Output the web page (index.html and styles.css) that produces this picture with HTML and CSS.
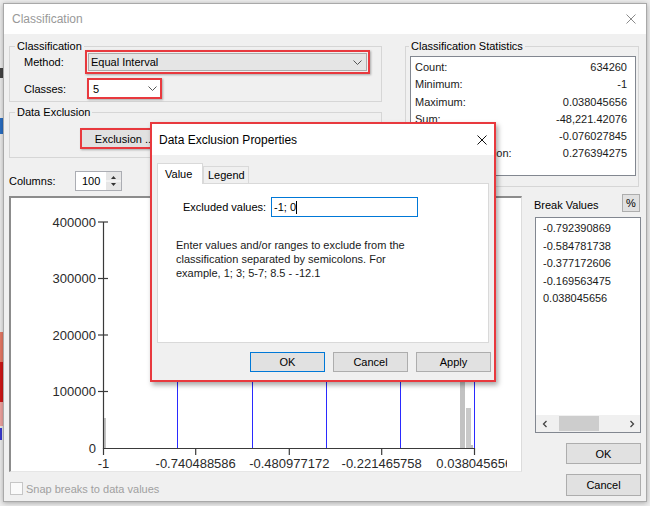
FILE: index.html
```html
<!DOCTYPE html>
<html>
<head>
<meta charset="utf-8">
<link rel="stylesheet" href="styles.css">
</head>
<body>
<div class="desk">
  <div class="dk dk-s"></div>
  <div class="dk dk-b"></div>
  <div class="dk dk-r1"></div>
  <div class="dk dk-r2"></div>
  <div class="dk dk-r3"></div>
  <div class="dk dk-b2"></div>
</div>

<div class="win-main">
  <div class="titlebar">
    <span class="title">Classification</span>
    <svg class="close" width="10" height="10" viewBox="0 0 10 10"><path d="M0.5 0.5L9.5 9.5M9.5 0.5L0.5 9.5" stroke="#8a8a8a" stroke-width="1" fill="none"/></svg>
  </div>
  <div class="client">
    <div class="top-row">
      <div class="left-stack">
        <div class="group g-class">
          <span class="gtitle">Classification</span>
          <div class="frow r-method">
            <span class="flabel">Method:</span>
            <div class="hl hl-method">
              <div class="combo combo-gray"><span>Equal Interval</span>
                <svg width="9" height="5" viewBox="0 0 9 5"><path d="M0.5 0.5L4.5 4.5L8.5 0.5" fill="none" stroke="#555" stroke-width="1"/></svg>
              </div>
            </div>
          </div>
          <div class="frow r-classes">
            <span class="flabel">Classes:</span>
            <div class="hl hl-classes">
              <div class="combo combo-white"><span>5</span>
                <svg width="9" height="5" viewBox="0 0 9 5"><path d="M0.5 0.5L4.5 4.5L8.5 0.5" fill="none" stroke="#555" stroke-width="1"/></svg>
              </div>
            </div>
          </div>
        </div>
        <div class="group g-excl">
          <span class="gtitle">Data Exclusion</span>
          <div class="hl hl-excl"><div class="xbtn">Exclusion ...</div></div>
        </div>
        <div class="columns-row">
          <span class="clabel">Columns:</span>
          <div class="spin">
            <span class="spin-val">100</span>
            <div class="spin-btns">
              <svg width="15" height="18" viewBox="0 0 15 18">
                <rect x="0" y="0" width="15" height="18" fill="#e6e6e6"/>
                <line x1="0" y1="9" x2="15" y2="9" stroke="#fff" stroke-width="1"/>
                <path d="M5 7L7.5 4L10 7Z" fill="#333"/>
                <path d="M5 11L10 11L7.5 14Z" fill="#333"/>
              </svg>
            </div>
          </div>
        </div>
      </div>
      <div class="group g-stats">
        <span class="gtitle">Classification Statistics</span>
        <div class="statlist">
          <div class="srow"><span>Count:</span><span>634260</span></div>
          <div class="srow"><span>Minimum:</span><span>-1</span></div>
          <div class="srow"><span>Maximum:</span><span>0.038045656</span></div>
          <div class="srow"><span>Sum:</span><span>-48,221.42076</span></div>
          <div class="srow"><span>Mean:</span><span>-0.076027845</span></div>
          <div class="srow"><span>Standard Deviation:</span><span>0.276394275</span></div>
        </div>
      </div>
    </div>

    <div class="mid-row">
      <div class="mid-left">
        <div class="hist">
          <svg class="chart" width="496" height="273" viewBox="11 198 496 273">
            <g fill="#c2c2c2">
              <rect x="104" y="418" width="2" height="30"/>
              <rect x="460" y="300" width="5" height="148"/>
              <rect x="466" y="408" width="5" height="40" fill="#c9c9c9"/>
              <rect x="471" y="445" width="2" height="3"/>
            </g>
            <g stroke="#2a2aff" stroke-width="1">
              <line x1="177.5" y1="198" x2="177.5" y2="448"/>
              <line x1="252.5" y1="198" x2="252.5" y2="448"/>
              <line x1="326.5" y1="198" x2="326.5" y2="448"/>
              <line x1="400.5" y1="198" x2="400.5" y2="448"/>
              <line x1="474.5" y1="198" x2="474.5" y2="448"/>
            </g>
            <g stroke="#3a3a3a" stroke-width="1.2" fill="none">
              <line x1="103.5" y1="222" x2="103.5" y2="449"/>
              <line x1="103" y1="448.5" x2="475" y2="448.5"/>
              <line x1="98" y1="222" x2="108" y2="222"/>
              <line x1="98" y1="278.5" x2="108" y2="278.5"/>
              <line x1="98" y1="335" x2="108" y2="335"/>
              <line x1="98" y1="391.5" x2="108" y2="391.5"/>
              <line x1="103.5" y1="448" x2="103.5" y2="455"/>
              <line x1="195.7" y1="448" x2="195.7" y2="455"/>
              <line x1="289.3" y1="448" x2="289.3" y2="455"/>
              <line x1="381.7" y1="448" x2="381.7" y2="455"/>
              <line x1="474.5" y1="448" x2="474.5" y2="455"/>
            </g>
            <g class="ylab" text-anchor="end">
              <text x="96" y="226.7">400000</text>
              <text x="96" y="283.2">300000</text>
              <text x="96" y="339.7">200000</text>
              <text x="96" y="396.2">100000</text>
              <text x="96" y="452.9">0</text>
            </g>
            <g class="xlab" text-anchor="middle">
              <text x="103.5" y="467.7">-1</text>
              <text x="195.7" y="467.7">-0.740488586</text>
              <text x="289.3" y="467.7">-0.480977172</text>
              <text x="381.7" y="467.7">-0.221465758</text>
              <text x="474.3" y="467.7">0.038045656</text>
            </g>
          </svg>
        </div>
        <div class="snap"><span class="cbox"></span><span class="snap-text">Snap breaks to data values</span></div>
      </div>
      <div class="mid-right">
        <div class="bv-head">
          <span class="bv-label">Break Values</span>
          <div class="pct">%</div>
        </div>
        <div class="breaklist">
          <div class="brows">
            <div>-0.792390869</div>
            <div>-0.584781738</div>
            <div>-0.377172606</div>
            <div>-0.169563475</div>
            <div>0.038045656</div>
          </div>
          <div class="hscroll">
            <svg width="8" height="8" viewBox="0 0 8 8"><path d="M5.5 1L2.5 4L5.5 7" fill="none" stroke="#444" stroke-width="1.3"/></svg>
            <div class="track"><div class="thumb"></div></div>
            <svg width="8" height="8" viewBox="0 0 8 8"><path d="M2.5 1L5.5 4L2.5 7" fill="none" stroke="#444" stroke-width="1.3"/></svg>
          </div>
        </div>
        <div class="btn main-ok">OK</div>
        <div class="btn main-cancel">Cancel</div>
      </div>
    </div>
  </div>
</div>

<div class="dlg">
  <div class="dlg-title">
    <span>Data Exclusion Properties</span>
    <svg width="10" height="10" viewBox="0 0 10 10"><path d="M0.5 0.5L9.5 9.5M9.5 0.5L0.5 9.5" stroke="#111" stroke-width="1" fill="none"/></svg>
  </div>
  <div class="dlg-body">
    <div class="tabs">
      <div class="tab sel">Value</div>
      <div class="tab">Legend</div>
    </div>
    <div class="page">
      <div class="excl-row">
        <span class="excl-label">Excluded values:</span>
        <div class="tbox">-1; 0<span class="caret"></span></div>
      </div>
      <p class="desc">Enter values and/or ranges to exclude from the<br>classification separated by semicolons. For<br>example, 1; 3; 5-7; 8.5 - -12.1</p>
    </div>
    <div class="dlg-btns">
      <div class="btn def">OK</div>
      <div class="btn">Cancel</div>
      <div class="btn">Apply</div>
    </div>
  </div>
</div>
</body>
</html>
```

FILE: styles.css
```css
* { box-sizing: border-box; }
html, body { margin: 0; padding: 0; }
body {
  width: 650px;
  height: 506px;
  overflow: hidden;
  position: relative;
  background: #e4e4e4;
  font-family: "Liberation Sans", Arial, sans-serif;
  font-size: 11px;
  color: #000;
}

/* desktop behind window */
.desk { position: absolute; left: 0; top: 0; width: 650px; height: 506px; background: #ededed; }
.dk { position: absolute; left: 0; width: 3px; }
.dk-s { top: 68px; height: 10px; background: #444; }
.dk-b { top: 118px; height: 16px; background: #2a6fc4; }
.dk-r1 { top: 332px; height: 30px; background: #e77a66; }
.dk-r2 { top: 362px; height: 40px; background: #d01818; }
.dk-r3 { top: 402px; height: 24px; background: #f0a4a0; }
.dk-b2 { top: 428px; height: 12px; background: #3a3ad0; width: 2px; }

/* main window */
.win-main {
  position: absolute;
  left: 3px;
  top: 3px;
  width: 644px;
  height: 499px;
  border: 1px solid #a9a9a9;
  background: #f0f0f0;
  box-shadow: 0 1px 5px rgba(0, 0, 0, 0.3);
  display: flex;
  flex-direction: column;
}
.titlebar {
  height: 30px;
  flex: none;
  background: #fff;
  display: flex;
  align-items: center;
  justify-content: space-between;
  padding: 0 10px 0 8px;
}
.title { font-size: 12px; color: #999; }
.close { display: block; }

.client { flex: 1; padding: 12px 0 0 5px; }

.top-row { display: flex; align-items: flex-start; }
.left-stack { width: 373px; }

.group {
  position: relative;
  border: 1px solid #d6d6d6;
}
.gtitle {
  position: absolute;
  top: -7px;
  left: 5px;
  padding: 0 2px;
  line-height: 13px;
  background: #f0f0f0;
  white-space: nowrap;
}

.g-class { padding: 3px 0 2px 0; }
.frow { display: flex; align-items: center; }
.r-classes { margin-top: 4px; }
.flabel { width: 61px; margin-left: 14px; }

.hl {
  border: 2px solid #e8393e;
  box-shadow: 1px 1px 2px rgba(0, 0, 0, 0.3);
}
.hl-method { width: 285px; height: 24px; padding: 1px; }
.hl-classes { width: 75px; height: 21px; margin-left: 2px; }
.combo {
  height: 100%;
  display: flex;
  align-items: center;
  justify-content: space-between;
}
.combo svg { display: block; }
.combo-gray { background: #e5e5e5; border: 1px solid #acacac; padding: 0 4px 0 2px; }
.combo-white { background: #fff; padding: 0 3px 0 4px; }

.g-excl { margin-top: 10px; padding: 15px 0 8px 0; }
.hl-excl { width: 89px; height: 21px; margin-left: 70px; }
.xbtn {
  height: 100%;
  background: #e1e1e1;
  display: flex;
  align-items: center;
  justify-content: center;
}

.columns-row { display: flex; align-items: center; margin-top: 13px; height: 20px; }
.clabel { width: 66px; }
.spin {
  width: 47px;
  height: 20px;
  background: #fff;
  border: 1px solid #abadb3;
  display: flex;
  align-items: center;
  justify-content: space-between;
}
.spin-val { padding-left: 6px; }
.spin-btns svg { display: block; }

.g-stats { width: 234px; margin-left: 23px; padding: 9px 0 10px 0; }
.g-stats .gtitle { left: 3px; }
.statlist {
  width: 226px;
  height: 120px;
  margin-left: 4px;
  background: #fff;
  border: 1px solid #828790;
  padding: 2px 8px 0 4px;
  color: #1a1a1a;
}
.srow { display: flex; justify-content: space-between; line-height: 17.3px; white-space: nowrap; }

/* middle */
.mid-row { display: flex; align-items: flex-start; margin-top: 3px; gap: 12px; }
.mid-left { width: 513px; }
.hist {
  margin-top: 2px;
  height: 276px;
  background: #fff;
  border-top: 2px solid #8c8c8c;
  border-left: 2px solid #8c8c8c;
  border-right: 1px solid #dcdcdc;
  border-bottom: 1px solid #e6e6e6;
}
.chart { display: block; overflow: hidden; }
.chart text { font-family: "Liberation Sans", Arial, sans-serif; font-size: 13px; fill: #2a2a2a; }

.snap { display: flex; align-items: center; margin-top: 10px; height: 13px; }
.cbox { width: 13px; height: 13px; border: 1px solid #c6c6c6; background: #fafafa; margin-left: 1px; }
.snap-text { margin-left: 3px; color: #a0a0a0; }

.mid-right { width: 107px; display: flex; flex-direction: column; }
.bv-head { display: flex; justify-content: space-between; align-items: flex-start; height: 18px; }
.bv-label { margin-top: 5px; line-height: 13px; }
.pct {
  width: 18px;
  height: 18px;
  margin-right: 1px;
  background: #e1e1e1;
  border: 1px solid #adadad;
  display: flex;
  align-items: center;
  justify-content: center;
}
.breaklist {
  margin: 5px 0 0 1px;
  width: 106px;
  height: 216px;
  background: #fff;
  border: 1px solid #828790;
  display: flex;
  flex-direction: column;
}
.brows { flex: 1; padding: 2px 0 0 7px; color: #1a1a1a; }
.brows div { line-height: 17.6px; }
.hscroll {
  height: 17px;
  background: #f0f0f0;
  display: flex;
  align-items: center;
  padding: 0 4px 0 5px;
  gap: 3px;
}
.hscroll svg { display: block; }
.track { flex: 1; height: 15px; }
.thumb { width: 40px; height: 15px; background: #cdcdcd; margin-left: 7px; }

.btn {
  width: 75px;
  height: 21px;
  background: #e1e1e1;
  border: 1px solid #adadad;
  display: flex;
  align-items: center;
  justify-content: center;
}
.main-ok { align-self: flex-end; margin-top: 10px; }
.main-cancel { align-self: flex-end; margin-top: 10px; height: 22px; }

/* dialog */
.dlg {
  position: absolute;
  left: 150px;
  top: 122px;
  width: 346px;
  height: 260px;
  border: 2px solid #e8393e;
  background: #f0f0f0;
  box-shadow: 2px 3px 5px rgba(0, 0, 0, 0.35);
  display: flex;
  flex-direction: column;
}
.dlg-title {
  height: 31px;
  flex: none;
  background: #fff;
  display: flex;
  align-items: center;
  justify-content: space-between;
  padding: 0 7px;
  font-size: 12px;
}
.dlg-title svg { display: block; }
.dlg-body { flex: 1; padding: 8px 0 0 5px; }
.tabs { display: flex; align-items: flex-end; height: 20px; }
.tab {
  width: 46px;
  height: 17px;
  border: 1px solid #d9d9d9;
  border-bottom: none;
  background: #f0f0f0;
  padding-left: 4px;
  line-height: 16px;
}
.tab.sel {
  background: #fff;
  padding-left: 7px;
  line-height: 20px;
  position: relative;
  z-index: 1;
  margin-bottom: -1px;
  height: 21px;
}
.page {
  width: 332px;
  height: 160px;
  background: #fff;
  border: 1px solid #d9d9d9;
  padding-top: 13px;
}
.excl-row { display: flex; align-items: center; }
.excl-label { margin-left: 25px; width: 88px; }
.tbox {
  width: 147px;
  height: 20px;
  border: 1px solid #0078d7;
  padding-left: 2px;
  display: flex;
  align-items: center;
}
.caret { display: inline-block; width: 1px; height: 13px; background: #000; }
.desc { margin: 22px 0 0 18px; line-height: 13.8px; color: #1a1a1a; }
.dlg-btns { display: flex; justify-content: flex-end; gap: 8px; margin-top: 9px; padding-right: 3px; }
.dlg-btns .btn { height: 20px; }
.btn.def { border-color: #0078d7; }
```
